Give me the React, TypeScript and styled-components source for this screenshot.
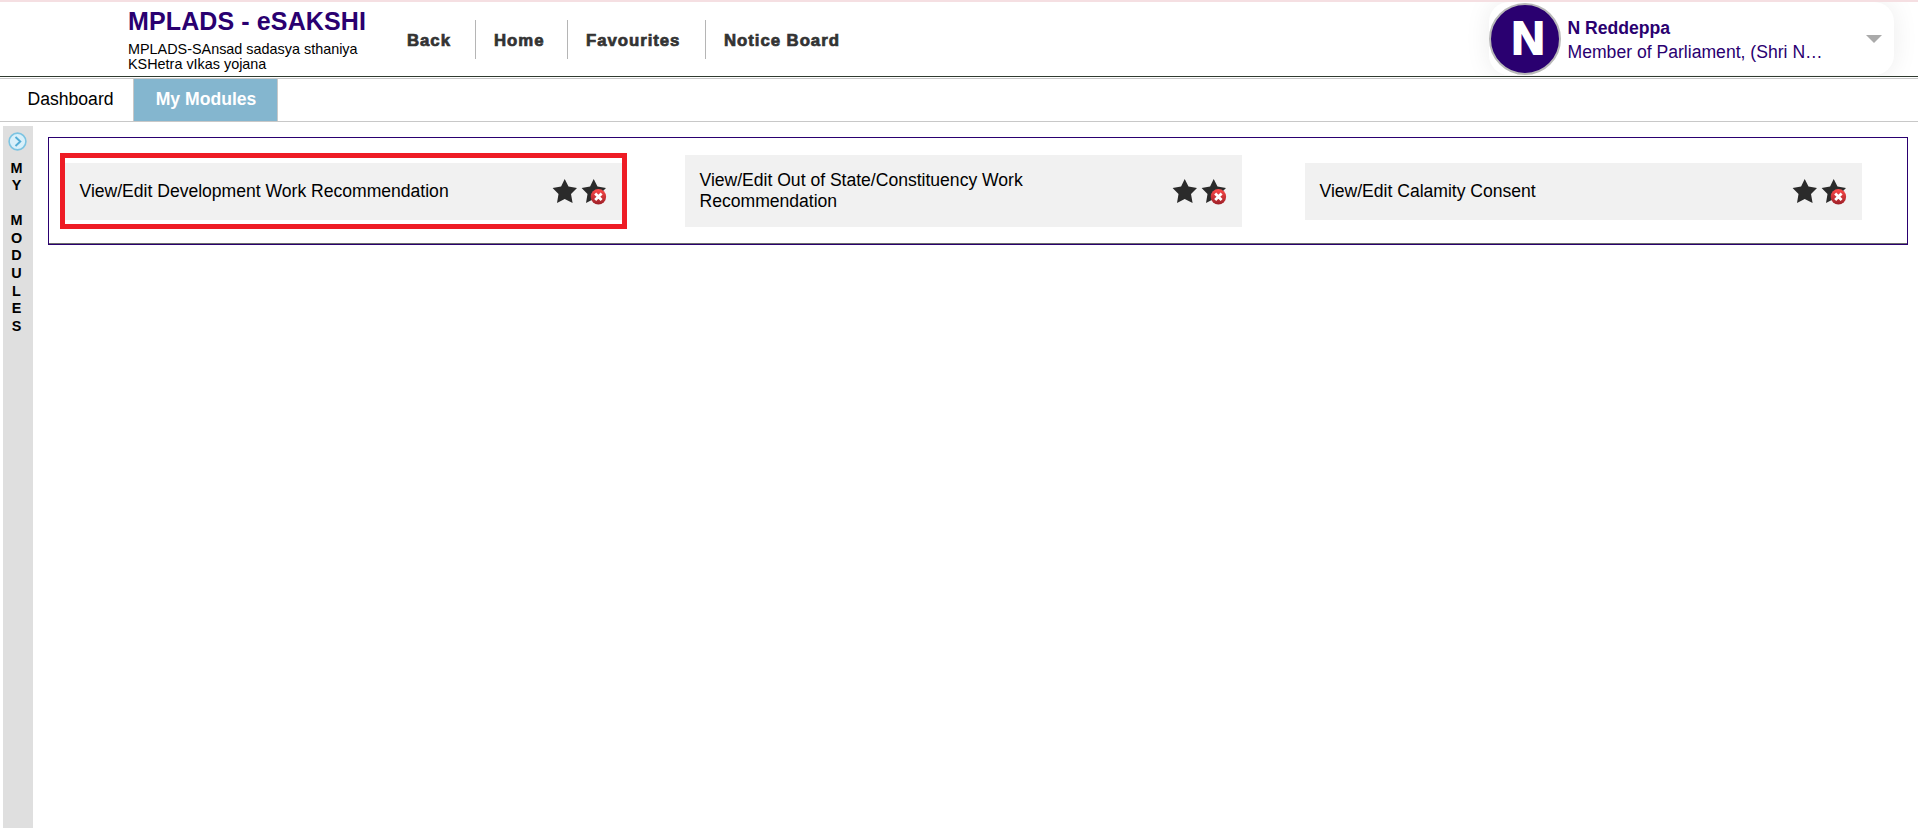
import React from 'react';
import styled, { createGlobalStyle } from 'styled-components';

const Global = createGlobalStyle`
  * { box-sizing: border-box; }
  html, body { height: 100%; }
  body { margin: 0; background: #fff; overflow: hidden; font-family: "Liberation Sans", Arial, sans-serif; color: #000; }
  #root { height: 100%; }
`;
const Page = styled.div`
  height: 828px; display: flex; flex-direction: column; border-top: 2px solid #f5dfe2;
`;
const Header = styled.header`
  height: 75px; flex: none; display: flex; border-bottom: 1px solid #2f3a2f; overflow: hidden;
`;
const Brand = styled.div`
  width: 250px; margin-left: 128px; padding-top: 4px;
`;
const Title = styled.h1`
  margin: 0; font-size: 25px; line-height: 30px; font-weight: bold; color: #2a0070; letter-spacing: 0.12px; white-space: nowrap;
`;
const Subtitle = styled.p`
  margin: 6px 0 0; font-size: 14.4px; line-height: 15px; white-space: nowrap;
`;
const Nav = styled.nav`
  display: flex; padding-top: 18px; margin-left: 11px;
`;
const NavItem = styled.a<{ $width: number; $last?: boolean }>`
  width: ${p => p.$width}px; height: 39px; padding-left: 18px; line-height: 42px;
  font-size: 16.8px; font-weight: bold; letter-spacing: 0.95px; color: #333; white-space: nowrap;
  -webkit-text-stroke: 0.7px #333;
  border-right: ${p => (p.$last ? 'none' : '1px solid #b5b5b5')};
`;
const Profile = styled.div`
  width: 405px; height: 73px; margin: 0 24px 0 auto; display: flex; align-items: flex-start;
  border-radius: 20px; box-shadow: 0 0 26px rgba(0, 0, 0, 0.08);
`;
const Avatar = styled.div`
  width: 72px; height: 72px; margin-top: 1px; flex: none; border-radius: 50%; border: 2px solid #b9b9b9;
  background: #2a0070; color: #fff; font-size: 46px; line-height: 67px; font-weight: bold; padding-left: 20.5px;
  -webkit-text-stroke: 1.8px #fff;
`;
const Person = styled.div`
  margin: 14px 0 0 6.5px; width: 284.5px; color: #2a0070; font-size: 17.6px; line-height: 24px; white-space: nowrap;
`;
const Name = styled.div`
  font-weight: bold;
`;
const Caret = styled.svg`
  display: block; margin: 33px 0 0 14px;
`;
const Tabs = styled.div`
  height: 44px; flex: none; margin-top: 1px; display: flex; border-top: 1px solid #c8c8c8; border-bottom: 1px solid #c8c8c8;
`;
const Tab = styled.div<{ $active?: boolean; $width: number }>`
  width: ${p => p.$width}px; text-align: center; font-size: 17.6px; line-height: 40px;
  font-weight: ${p => (p.$active ? 'bold' : 'normal')};
  color: ${p => (p.$active ? '#fff' : '#000')};
  background: ${p => (p.$active ? '#84b6cf' : 'transparent')};
  border: solid #c8c8c8; border-width: ${p => (p.$active ? '0 1px' : '0')};
  padding-left: ${p => (p.$active ? 1 : 8)}px;
`;
const Body = styled.main`
  flex: 1; display: flex; padding: 4px 10px 0 3px;
`;
const Rail = styled.aside`
  width: 30px; background: #dfdfdf; padding: 6px 3px 0 0; display: flex; flex-direction: column; align-items: center;
  font-size: 14.4px; font-weight: bold;
`;
const RailIcon = styled.svg`
  display: block; margin: 0 0 8.6px 1px; flex: none;
`;
const Letter = styled.span`
  height: 17.58px; line-height: 17.58px;
`;
const Panel = styled.section`
  flex: 1; height: 108px; margin: 11px 0 0 15px; border: 1px solid #2a0070; box-shadow: inset 0 -1px #6b6b6b;
  display: grid; grid-template-columns: 620px 620px 1fr; align-items: center; padding: 0 0 0 11px;
`;
const Frame = styled.div<{ $marked?: boolean; $tall?: boolean }>`
  width: 567px; padding: ${p => (p.$marked ? '5px 0 4px' : p.$tall ? '0' : '1px 0 0')};
  border: 5px solid ${p => (p.$marked ? '#ee1c25' : 'transparent')};
`;
const Card = styled.div<{ $tall?: boolean }>`
  width: 557px; height: ${p => (p.$tall ? 72 : 57)}px; background: #f1f1f1; display: flex; align-items: center;
  padding: 0 15px 0 14.5px; font-size: 17.6px; line-height: 21px;
`;
const Label = styled.div`
  width: 400px; letter-spacing: -0.02px;
`;
const Stars = styled.div<{ $tall?: boolean }>`
  display: flex; gap: 3px; margin-left: auto; padding-top: ${p => (p.$tall ? 2 : 1)}px;
`;

const starPath = 'M12.7 1 L16.5 8.6 L25 10.1 L19 16 L20.6 25 L12.7 21.1 L5 25 L6.5 16 L0.6 10.1 L9.1 8.6 Z';

function Star({ removable }: { removable?: boolean }) {
  return (
    <svg width="26" height="28" viewBox="0 0 26 28">
      <defs>
        <linearGradient id="badge" x1="0" y1="0" x2="0" y2="1">
          <stop offset="0" stopColor="#ff4a4a" />
          <stop offset="1" stopColor="#9d2027" />
        </linearGradient>
      </defs>
      <path d={starPath} fill="#2b2b2b" />
      {removable && (
        <>
          <circle cx="17.4" cy="18.8" r="7.7" fill="url(#badge)" />
          <path d="M14.2 15.6 L20.6 22 M20.6 15.6 L14.2 22" stroke="#fff" strokeWidth="2.8" />
        </>
      )}
    </svg>
  );
}

const modules = [
  { label: 'View/Edit Development Work Recommendation', marked: true },
  { label: 'View/Edit Out of State/Constituency Work Recommendation', tall: true },
  { label: 'View/Edit Calamity Consent' },
];

export default function App() {
  return (
    <>
      <Global />
      <Page>
        <Header>
          <Brand>
            <Title>MPLADS - eSAKSHI</Title>
            <Subtitle>MPLADS-SAnsad sadasya sthaniya<br />KSHetra vIkas yojana</Subtitle>
          </Brand>
          <Nav>
            <NavItem $width={87}>Back</NavItem>
            <NavItem $width={92}>Home</NavItem>
            <NavItem $width={138}>Favourites</NavItem>
            <NavItem $width={150} $last>Notice Board</NavItem>
          </Nav>
          <Profile>
            <Avatar>N</Avatar>
            <Person>
              <Name>N Reddeppa</Name>
              <div>Member of Parliament, (Shri N…</div>
            </Person>
            <Caret width="16" height="8" viewBox="0 0 16 8"><path d="M0 0H16L8 8Z" fill="#aaa" /></Caret>
          </Profile>
        </Header>
        <Tabs>
          <Tab $width={133}>Dashboard</Tab>
          <Tab $width={145} $active>My Modules</Tab>
        </Tabs>
        <Body>
          <Rail>
            <RailIcon width="19" height="19" viewBox="0 0 19 19">
              <circle cx="9.5" cy="9.5" r="8.4" fill="#d9f0fa" stroke="#7cc4e2" strokeWidth="1.6" />
              <path d="M7.5 5 L12.3 9.5 L7.5 14" fill="none" stroke="#55aed6" strokeWidth="1.9" />
            </RailIcon>
            {'MY MODULES'.split('').map((c, i) => <Letter key={i}>{c}</Letter>)}
          </Rail>
          <Panel>
            {modules.map(m => (
              <Frame key={m.label} $marked={m.marked} $tall={m.tall}>
                <Card $tall={m.tall}>
                  <Label>{m.label}</Label>
                  <Stars $tall={m.tall}><Star /><Star removable /></Stars>
                </Card>
              </Frame>
            ))}
          </Panel>
        </Body>
      </Page>
    </>
  );
}
